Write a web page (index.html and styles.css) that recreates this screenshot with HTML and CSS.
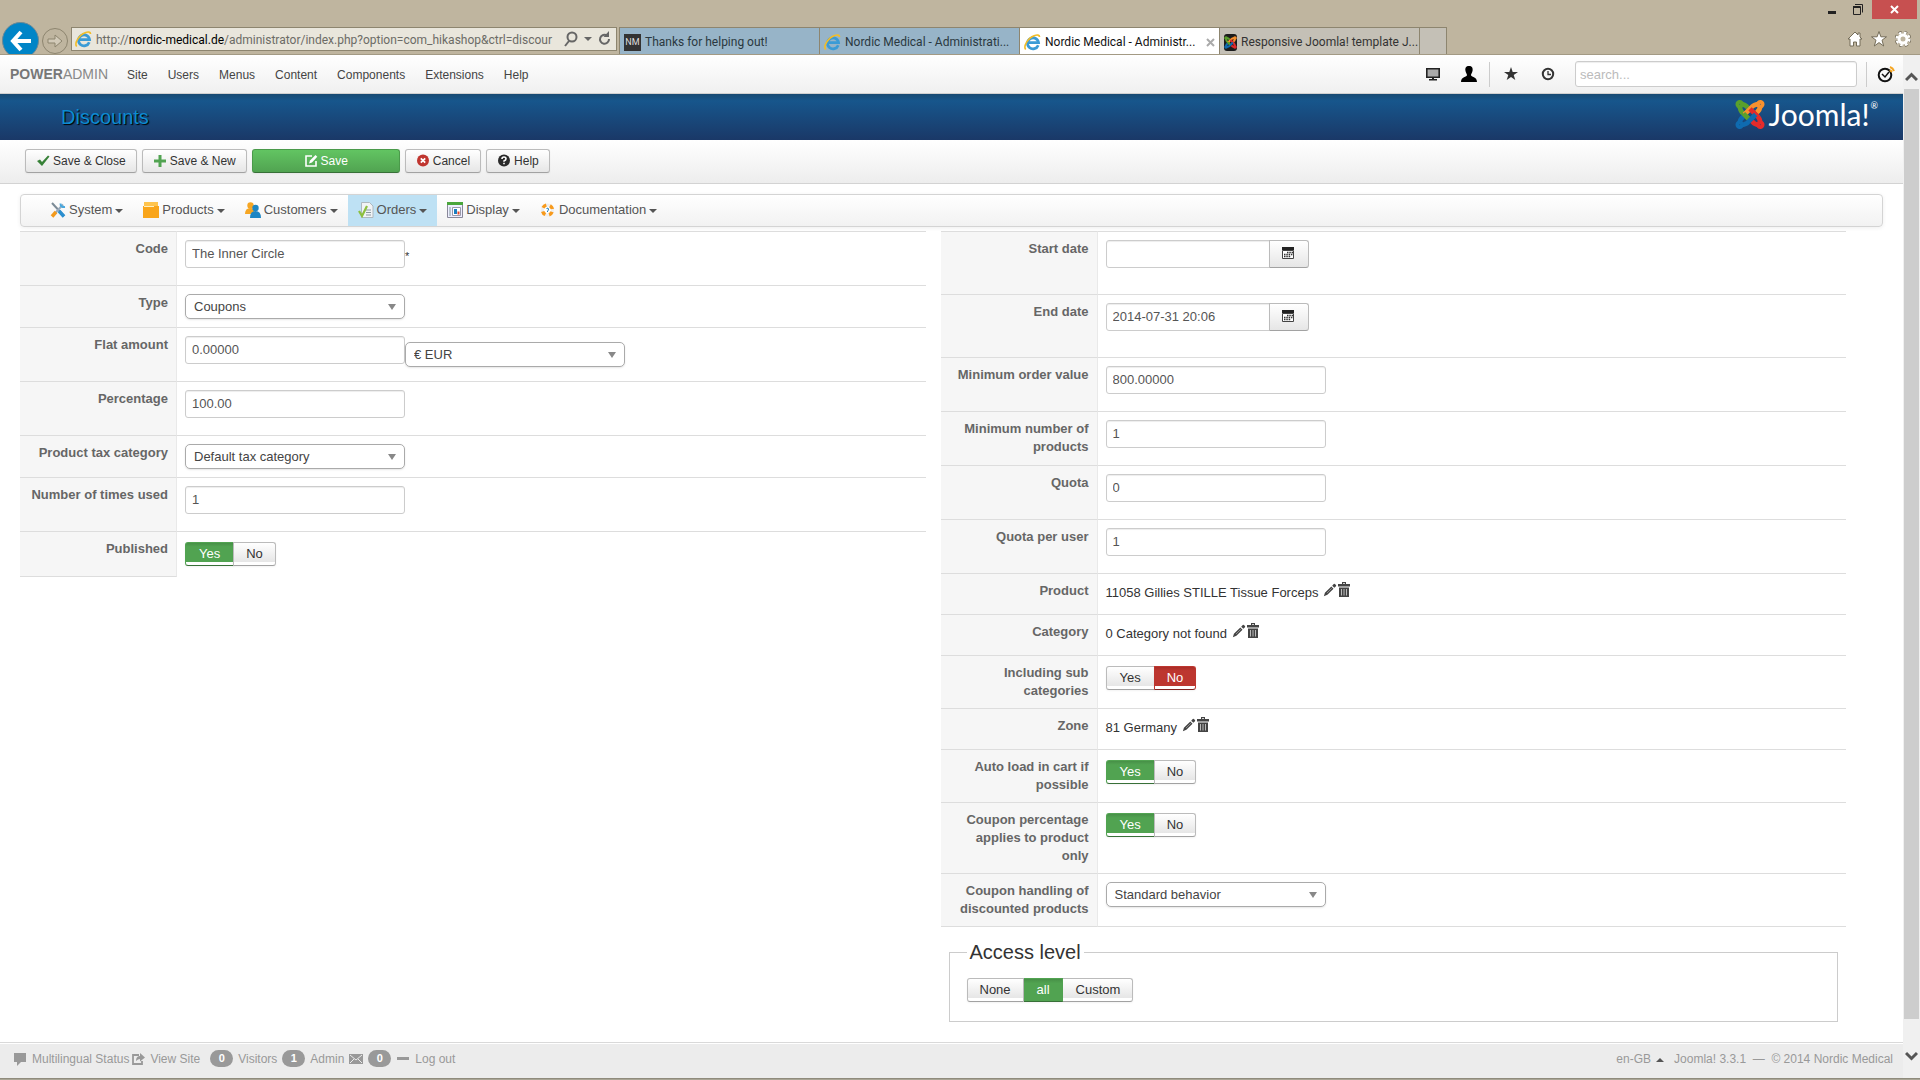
FILE: index.html
```html
<!DOCTYPE html>
<html lang="en-GB">
<head>
<meta charset="utf-8">
<title>Nordic Medical - Administration</title>
<link rel="stylesheet" href="styles.css">
</head>
<body>
<svg class="defs" aria-hidden="true">
  <symbol id="ie" viewBox="0 0 16 16">
    <path d="M13.400 10.600A5.200 5.200 0 1 1 13.700 8.200H4.600" fill="none" stroke="#3b9bd6" stroke-width="2.600"/>
    <path d="M1.600 14.600C-1 11.500 4 3.600 9.500 1.600c3-1.100 5-.8 5.200 1.200" fill="none" stroke="#f3bd27" stroke-width="1.500"/>
  </symbol>
  <symbol id="joomla" viewBox="0 0 32 32">
    <g fill="none" stroke-width="5">
      <g stroke="#5aa02c"><circle cx="5" cy="5" r="2"/><path d="M5 6Q5 12 9 15L16 22M6 5Q11 5 14 9"/></g>
      <g stroke="#f9912e" transform="rotate(90 16 16)"><circle cx="5" cy="5" r="2"/><path d="M5 6Q5 12 9 15L16 22M6 5Q11 5 14 9"/></g>
      <g stroke="#e32b2b" transform="rotate(180 16 16)"><circle cx="5" cy="5" r="2"/><path d="M5 6Q5 12 9 15L16 22M6 5Q11 5 14 9"/></g>
      <g stroke="#0f6bb0" transform="rotate(270 16 16)"><circle cx="5" cy="5" r="2"/><path d="M5 6Q5 12 9 15L16 22M6 5Q11 5 14 9"/></g>
      <path stroke="#5aa02c" d="M9 15L14 20"/>
    </g>
  </symbol>
  <symbol id="calendar" viewBox="0 0 16 16">
    <path d="M2 2h12v3H2z" fill="#222"/><path d="M2.500 5.500h11v8h-11z" fill="#fff" stroke="#444"/>
    <path d="M7 7.500h6M4 9.500h9M4 11.500h7" stroke="#333" stroke-width="1.400" stroke-dasharray="1.500 .8"/>
  </symbol>
  <symbol id="pencil" viewBox="0 0 16 16">
    <path d="M1 15l1.200-4L9.500 4l2.500 2.500-7 7zM10.500 3l1.800-1.800q.7-.6 1.300 0l1.200 1.200q.6.600 0 1.300L13 5.500z" fill="#444"/><path d="M4.500 11.500L10 6" stroke="#999"/>
  </symbol>
  <symbol id="trash" viewBox="0 0 16 16">
    <path d="M2 2h4V0h4v2h4v2.500H2zM7 1.200v.8h2v-.8zM3 5.500h10V15H3z" fill="#444" fill-rule="evenodd"/><path d="M5.500 7v6.500M8 7v6.500M10.500 7v6.500" stroke="#bbb"/>
  </symbol>
</svg>

<header class="chrome">
  <div class="titlebar">
    <button class="win" aria-label="Minimise"><svg width="12" height="16"><path d="M2 11h8v3H2z" fill="#222"/></svg></button>
    <button class="win" aria-label="Restore"><svg width="12" height="16" fill="none" stroke="#222"><path d="M1 6.500h7.500v8H1.500v-8M1 7.500h8M3 4.500h7.500v8"/></svg></button>
    <button class="win win-close" aria-label="Close"><svg width="9" height="19" stroke="#fff" stroke-width="2"><path d="M1 6l7 7M8 6l-7 7"/></svg></button>
  </div>
  <div class="navrow">
    <button class="back" aria-label="Back"><svg width="24" height="24" fill="none" stroke="#fff" stroke-width="4"><path d="M22 12H4M12 3l-8 9 8 9"/></svg></button>
    <button class="forward" aria-label="Forward"><svg width="18" height="18" fill="#d2cab8" stroke="#8d856f"><path d="M2 7h7V3l7 6-7 6v-4H2z"/></svg></button>
    <div class="address">
      <svg width="17" height="17"><use href="#ie"/></svg>
      <span class="url">http://<b>nordic-medical.de</b>/administrator/index.php?option=com_hikashop&amp;ctrl=discour</span>
      <svg width="50" height="16" fill="none" stroke="#666" stroke-width="2"><circle cx="9" cy="6" r="4.500"/><path d="M6 10l-4 5"/><path d="M21 6h8l-4 4z" fill="#666" stroke="none"/><path d="M44 4.500A4.500 4.500 0 1 0 46 8"/><path d="M46 0v6h-5.500z" fill="#666" stroke="none"/></svg>
    </div>
    <div class="tabs">
      <a class="tab" href="#"><span class="nm">NM</span><span>Thanks for helping out!</span></a>
      <a class="tab" href="#"><svg width="17" height="17"><use href="#ie"/></svg><span>Nordic Medical - Administrati...</span></a>
      <a class="tab tab-on" href="#"><svg width="17" height="17"><use href="#ie"/></svg><span>Nordic Medical - Administr...</span><svg class="tab-x" width="9" height="9" stroke="#aaa" stroke-width="2"><path d="M1 1l7 7M8 1l-7 7"/></svg></a>
      <a class="tab tab-grey" href="#"><span class="fav"><svg width="13" height="13"><use href="#joomla"/></svg></span><span>Responsive Joomla! template J...</span></a>
      <button class="tab-new" aria-label="New tab"></button>
    </div>
    <div class="tools">
      <svg width="16" height="16" viewBox="0 0 16 16"><path d="M8 1L1 8h2v7h3.500v-4h3v4H13V8h2l-2-2V2h-2v2z"/></svg>
      <svg width="16" height="16" viewBox="0 0 16 16"><path d="M8 .5l1.900 5.300h5.600l-4.500 3.400 1.700 5.800L8 11.600 3.300 15 5 9.200.5 5.800h5.600z"/></svg>
      <svg width="16" height="16" viewBox="0 0 16 16"><circle cx="8" cy="8" r="6.300" fill="none" stroke="#756d59" stroke-width="4" stroke-dasharray="3 1.950"/><circle cx="8" cy="8" r="6.300" fill="none" stroke="#fff" stroke-width="2.500" stroke-dasharray="2.600 2.350"/><circle cx="8" cy="8" r="4" fill="none" stroke="#fff" stroke-width="3"/><circle cx="8" cy="8" r="2" fill="#bfb59f"/></svg>
    </div>
  </div>
</header>

<div class="viewport">
<div class="page">
  <nav class="topnav">
    <a class="brand" href="#"><b>POWER</b>ADMIN</a>
    <a href="#">Site</a><a href="#">Users</a><a href="#">Menus</a><a href="#">Content</a><a href="#">Components</a><a href="#">Extensions</a><a href="#">Help</a>
    <div class="topicons">
      <svg width="16" height="16"><path d="M1.800 2.800h12.400v8.400H1.800z" fill="#aaa" stroke="#222" stroke-width="1.600"/><path d="M7 11h2v2h3v1.500H4V13h3z" fill="#222"/></svg>
      <svg class="user" width="18" height="18"><path d="M9 1c3 0 4 2 3.600 4.500C12.300 8 11 9 11 10c0 2 6 1.500 6 7H1c0-5.500 6-5 6-7 0-1-1.300-2-1.600-4.500C5 3 6 1 9 1z" fill="#000"/></svg>
      <div class="recent">
        <svg width="14" height="14"><path d="M7 0l1.700 5H14L9.700 8.100 11.300 13 7 10 2.700 13l1.600-4.900L0 5h5.300z" fill="#333"/></svg>
        <svg width="14" height="14" fill="none" stroke="#333" stroke-width="2"><circle cx="7" cy="7" r="5.200"/><path d="M7 4v3.500h3" stroke-width="1.300"/></svg>
      </div>
      <input class="search" type="text" placeholder="search..." aria-label="Search">
      <div class="jsn"><svg width="20" height="18" fill="none" stroke="#111" stroke-width="2"><circle cx="8" cy="10" r="6.300"/><path d="M5 9l3 3 4-5" stroke-width="1.500"/><path d="M13 2q3 1 4 4M13 5l2 2" stroke="#f5a623"/></svg></div>
    </div>
  </nav>
  <div class="pagehead"><h1>Discounts</h1><div class="joomla"><svg width="30" height="31" viewBox="0 0 32 32"><use href="#joomla"/></svg><span>Joomla!</span><sup>®</sup></div></div>
  <div class="toolbar">
    <button class="btn"><svg width="14" height="14"><path d="M1 7l3-1.500L6 8l6-6.500 1.500 1L6 12z" fill="#378137"/></svg>Save &amp; Close</button>
    <button class="btn"><svg width="14" height="14"><path d="M5.500 1h3v4.500H13v3H8.500V13h-3V8.500H1v-3h4.500z" fill="#51a351"/></svg>Save &amp; New</button>
    <button class="btn btn-save"><svg width="14" height="14" fill="none" stroke="#fff" stroke-width="1.600"><path d="M8 2H2v10h10V7"/><path d="M5 9.500l1-3L11.500 1l1.800 1.800L8 8.500z" fill="#fff" stroke="none"/></svg>Save</button>
    <button class="btn"><svg width="14" height="14"><circle cx="7" cy="6.500" r="6" fill="#c0352f"/><path d="M4.800 4.300l4.400 4.400M9.200 4.300L4.800 8.700" stroke="#fff" stroke-width="1.700"/></svg>Cancel</button>
    <button class="btn"><svg width="14" height="14"><circle cx="7" cy="6.500" r="6" fill="#2b2b2b"/><path d="M5 5q0-2 2-2t2 1.700Q9 6 7 7v.8M7 8.800v1.500" fill="none" stroke="#fff" stroke-width="1.600"/></svg>Help</button>
  </div>

  <nav class="hika">
    <a href="#"><svg width="16" height="16"><path d="M2 1l12 13" stroke="#7b8b96" stroke-width="2"/><path d="M9 9l5 5.500" stroke="#2b8fd0" stroke-width="3.500"/><path d="M13 2.500L3 13.500" stroke="#9ab" stroke-width="2"/><path d="M6 10l-4 4.500" stroke="#f39a1c" stroke-width="3.500"/><path d="M10.500 1.500q0 4 4.500 3.500" fill="none" stroke="#49a7dd" stroke-width="2"/></svg>System</a>
    <a href="#"><svg width="16" height="16"><path d="M1 0h14v4H1z" fill="#ffc44d"/><path d="M0 4h16v12H0z" fill="#f9a51a"/><path d="M1 4.500h10" stroke="#fff0c0"/></svg>Products</a>
    <a href="#"><svg width="16" height="16"><circle cx="5.500" cy="3.500" r="3.200" fill="#f6a623"/><path d="M0 12q0-6 5.500-6 3 0 4 3v3z" fill="#f6a623"/><circle cx="10.500" cy="6" r="3.200" fill="#1c86c4"/><path d="M5 16q0-7 5.500-7t5.500 7z" fill="#1c86c4"/></svg>Customers</a>
    <a class="on" href="#"><svg width="16" height="16"><path d="M3.500.5h8l3.500 3.500v11.500H3.500z" fill="#f0f3f5" stroke="#aeb8be"/><path d="M8 8h5M8 10.500h5M8 13h5" stroke="#8a98a0"/><path d="M1 9l3 5 5-10" fill="none" stroke="#8cbf3f" stroke-width="2.200"/></svg>Orders</a>
    <a href="#"><svg width="16" height="16"><path d="M.5 1.500h15v14H.5z" fill="#eef" stroke="#889"/><path d="M0 0h16v3H0z" fill="#4aa63c"/><path d="M2 5h2v9H2z" fill="#b9c5ce"/><path d="M5.500 5.500h8v8h-8z" fill="#fff" stroke="#99a"/><path d="M7 7h3v5H7z" fill="#1b7ec0"/><path d="M10.500 9.500h2v3h-2z" fill="#e8472b"/></svg>Display</a>
    <a href="#"><svg width="16" height="16"><circle cx="7.500" cy="8" r="5" fill="#fff" stroke="#eee" stroke-width="3"/><circle cx="7.500" cy="8" r="5" fill="none" stroke="#f79a1c" stroke-width="3.500" stroke-dasharray="4 3.854" stroke-dashoffset="-2"/><path d="M6.500 6.500q2-1 2 .500t-1 2v1" fill="none" stroke="#1b7ec0"/></svg>Documentation</a>
  </nav>

  <main class="columns">
    <table class="form">
      <tr class="r-input"><th><label for="code">Code</label></th><td><input id="code" type="text" value="The Inner Circle"><span class="req">*</span></td></tr>
      <tr><th><label for="type">Type</label></th><td><span class="sel"><select id="type"><option>Coupons</option></select></span></td></tr>
      <tr class="r-input"><th><label for="flat">Flat amount</label></th><td><div class="pair"><input id="flat" type="text" value="0.00000"><span class="sel"><select aria-label="Currency"><option>€ EUR</option></select></span></div></td></tr>
      <tr class="r-input"><th><label for="pct">Percentage</label></th><td><input id="pct" type="text" value="100.00"></td></tr>
      <tr><th><label for="tax">Product tax category</label></th><td><span class="sel"><select id="tax"><option>Default tax category</option></select></span></td></tr>
      <tr class="r-input"><th><label for="used">Number of times used</label></th><td><input id="used" type="text" value="1"></td></tr>
      <tr class="r-last"><th>Published</th><td><div class="group" role="radiogroup" aria-label="Published"><label class="yes"><input type="radio" name="pub" checked>Yes</label><label><input type="radio" name="pub">No</label></div></td></tr>
    </table>

    <div>
      <table class="form form-right">
        <tr class="r-date"><th><label for="start">Start date</label></th><td><div class="date"><input id="start" type="text"><button aria-label="Pick start date"><svg width="16" height="16"><use href="#calendar"/></svg></button></div></td></tr>
        <tr class="r-date"><th><label for="end">End date</label></th><td><div class="date"><input id="end" type="text" value="2014-07-31 20:06"><button aria-label="Pick end date"><svg width="16" height="16"><use href="#calendar"/></svg></button></div></td></tr>
        <tr class="r-input"><th><label for="minv">Minimum order value</label></th><td><input id="minv" type="text" value="800.00000"></td></tr>
        <tr class="r-input"><th><label for="minn">Minimum number of products</label></th><td><input id="minn" type="text" value="1"></td></tr>
        <tr class="r-input"><th><label for="quota">Quota</label></th><td><input id="quota" type="text" value="0"></td></tr>
        <tr class="r-input"><th><label for="quser">Quota per user</label></th><td><input id="quser" type="text" value="1"></td></tr>
        <tr><th>Product</th><td><div class="pick"><span>11058 Gillies STILLE Tissue Forceps</span><a href="#" aria-label="Edit"><svg width="14" height="16"><use href="#pencil" width="14" height="16"/></svg></a><a href="#" aria-label="Delete"><svg width="12" height="16" viewBox="2 0 12 16"><use href="#trash" width="16" height="16"/></svg></a></div></td></tr>
        <tr><th>Category</th><td><div class="pick"><span>0 Category not found</span><a href="#" aria-label="Edit"><svg width="14" height="16"><use href="#pencil" width="14" height="16"/></svg></a><a href="#" aria-label="Delete"><svg width="12" height="16" viewBox="2 0 12 16"><use href="#trash" width="16" height="16"/></svg></a></div></td></tr>
        <tr><th>Including sub categories</th><td><div class="group" role="radiogroup" aria-label="Including sub categories"><label><input type="radio" name="sub">Yes</label><label class="no"><input type="radio" name="sub" checked>No</label></div></td></tr>
        <tr><th>Zone</th><td><div class="pick"><span>81 Germany</span><a href="#" aria-label="Edit"><svg width="14" height="16"><use href="#pencil" width="14" height="16"/></svg></a><a href="#" aria-label="Delete"><svg width="12" height="16" viewBox="2 0 12 16"><use href="#trash" width="16" height="16"/></svg></a></div></td></tr>
        <tr><th>Auto load in cart if possible</th><td><div class="group" role="radiogroup" aria-label="Auto load in cart if possible"><label class="yes"><input type="radio" name="auto" checked>Yes</label><label><input type="radio" name="auto">No</label></div></td></tr>
        <tr><th>Coupon percentage applies to product only</th><td><div class="group" role="radiogroup" aria-label="Coupon percentage applies to product only"><label class="yes"><input type="radio" name="only" checked>Yes</label><label><input type="radio" name="only">No</label></div></td></tr>
        <tr><th><label for="handling">Coupon handling of discounted products</label></th><td><span class="sel"><select id="handling"><option>Standard behavior</option></select></span></td></tr>
      </table>
      <fieldset class="access">
        <legend>Access level</legend>
        <div class="group"><label><input type="radio" name="acl">None</label><label class="yes full"><input type="radio" name="acl" checked>all</label><label><input type="radio" name="acl">Custom</label></div>
      </fieldset>
    </div>
  </main>

  <footer class="status">
    <svg width="14" height="14"><path d="M1 1h12v9H8l-4 4v-4H1z"/></svg><a href="#">Multilingual Status</a>
    <svg width="14" height="14"><path d="M8 3H2v9h9V9" fill="none" stroke="#999" stroke-width="1.800"/><path d="M5 9q0-5 4-5V1l5 4.500-5 4V7Q7 7 5 9z"/></svg><a class="view" href="#">View Site</a>
    <span class="badge">0</span><span>Visitors</span>
    <span class="badge">1</span><span>Admin</span>
    <svg width="14" height="14"><path d="M0 2h14v10H0z"/><path d="M1 3l6 5 6-5M1 11l4-4M13 11L9 7" fill="none" stroke="#ececec"/></svg>
    <span class="badge">0</span>
    <svg width="14" height="14"><path d="M1 5h12v3H1z"/></svg><a href="#">Log out</a>
    <span class="right"><a class="lang" href="#">en-GB</a><span>Joomla! 3.3.1&nbsp; —&nbsp; © 2014 Nordic Medical</span></span>
  </footer>
</div>
<div class="scroll" aria-hidden="true">
  <svg width="13" height="10" fill="none" stroke="#555" stroke-width="3"><path d="M1 8l5.500-5.500L12 8"/></svg>
  <div class="thumb"></div>
  <svg width="13" height="10" fill="none" stroke="#555" stroke-width="3"><path d="M1 2l5.500 5.500L12 2"/></svg>
</div>
</div>
<div class="taskbar"></div>
</body>
</html>
```
FILE: styles.css
```css
* { box-sizing: border-box; }
body {
  margin: 0;
  min-height: 100vh;
  display: flex;
  flex-direction: column;
  background: #fff;
  color: #333;
  font: 13px/18px "Liberation Sans", Arial, sans-serif;
}
a { color: inherit; text-decoration: none; }
button, input, select { font: inherit; color: inherit; margin: 0; }
svg { flex: none; display: block; }
.defs { position: absolute; width: 0; height: 0; }

/* Browser frame */
.chrome { background: #bfb59f; border-bottom: 1px solid #a39a84; overflow: hidden; font: 12px/18px Roboto, "Noto Sans", sans-serif; }
.titlebar { height: 27px; display: flex; justify-content: flex-end; align-items: flex-start; padding-right: 3px; }
.win { border: 0; background: none; padding: 0; height: 19px; width: 26px; display: flex; justify-content: center; }
.win-close { width: 45px; margin-left: 1px; background: #c75050; }
.navrow { height: 27px; display: flex; align-items: center; padding-left: 2px; }
.back { flex: none; width: 37px; height: 37px; border: 1px solid #6d8894; border-radius: 50%; background: #0085c7; padding: 0; display: grid; place-items: center; margin-right: 3px; }
.forward { flex: none; width: 26px; height: 26px; border: 1px solid #8d856f; border-radius: 50%; background: none; padding: 0; display: grid; place-items: center; margin-right: 3px; }
.address { flex: none; width: 546px; height: 24px; margin: 0 2px 3px 0; border: 1px solid #8d856f; background: #e9e6dc; display: flex; align-items: center; gap: 4px; padding: 0 3px; }
.url { flex: 1; min-width: 0; color: #6c6b66; white-space: nowrap; padding-top: 2px; }
.url b { font-weight: 400; color: #000; }
.tabs { display: flex; align-self: stretch; border: solid #8d856f; border-width: 1px 0 0 1px; }
.tab { width: 200px; display: flex; align-items: center; gap: 4px; padding: 2px 4px 0; border-right: 1px solid #8d856f; background: #97b4c8; color: #2a3840; white-space: nowrap; }
.tab-on { background: #fff; color: #111; }
.tab-x { margin-left: auto; }
.tab-grey { background: #c4c0b6; color: #333; }
.tab-new { width: 27px; padding: 0; border: 0; border-right: 1px solid #8d856f; background: #c4c0b6; }
.nm { width: 17px; height: 17px; background: #333; color: #ddd; font-size: 9px; line-height: 17px; text-align: center; }
.fav { width: 17px; height: 17px; border-radius: 3px; background: #1c1c1c; display: grid; place-items: center; }
.tools { margin-left: auto; display: flex; gap: 8px; padding: 0 9px 3px 0; }
.tools path { fill: #fff; stroke: #756d59; stroke-width: 1; }

.viewport { flex: 1; display: flex; }
.page { flex: 1; min-width: 0; display: flex; flex-direction: column; }
.scroll { width: 17px; background: #f0f0f0; display: flex; flex-direction: column; align-items: center; padding: 17px 1px; }
.thumb { flex: 1; align-self: stretch; background: #cdcdcd; margin: 7px 0 32px; }
.taskbar { height: 2px; background: #a9a595; border-top: 1px solid #8f8b7c; }

/* Admin bar */
.topnav { height: 39px; display: flex; align-items: center; padding: 0 10px; background: linear-gradient(#fff, #f0f0f0); border-bottom: 1px solid #d0d0d0; font-size: 12px; color: #444; }
.topnav > a { padding: 2px 10px 0; }
.topnav > .brand { padding: 0 9px 0 0; font-size: 14px; color: #888; }
.brand b { color: #777; }
.topicons { margin-left: auto; display: flex; align-items: center; }
.user { margin: 0 11px 0 19px; }
.recent { display: flex; align-items: center; gap: 23px; height: 25px; margin-right: 20px; padding-left: 14px; border-left: 1px solid #ccc; }
.search { width: 282px; height: 26px; border: 1px solid #ccc; border-radius: 3px; background: #fff; padding: 0 4px; font-size: 13px; box-shadow: inset 0 1px 1px #eee; }
.search::placeholder { color: #bbb; opacity: 1; }
.jsn { margin-left: 9px; padding-left: 10px; border-left: 1px solid #ccc; height: 25px; display: flex; align-items: center; margin-right: -4px; }

.pagehead { height: 46px; display: flex; justify-content: space-between; align-items: center; padding: 0 25px 0 61px; background: linear-gradient(#184a72, #17568c 15%, #1a3867); }
h1 { margin: 0; font-size: 20px; line-height: 24px; font-weight: 400; color: #0d8bd2; text-shadow: 1px 1px 1px #000; }
.joomla { display: flex; align-items: center; gap: 4px; color: #fff; font: 30px/30px Lato, sans-serif; padding-bottom: 6px; }
.joomla sup { font-size: 9px; line-height: 10px; align-self: flex-start; margin: 2px 0 0 -3px; }

.toolbar { height: 44px; display: flex; align-items: flex-start; gap: 5px; padding: 9px 25px; background: linear-gradient(#fff, #ededed); border-bottom: 1px solid #d3d3d3; }
.btn { height: 24px; display: flex; align-items: center; justify-content: center; gap: 3px; padding: 0 10px; border: 1px solid #bbb; border-bottom-color: #a2a2a2; border-radius: 3px; background: linear-gradient(#fff, #e6e6e6); box-shadow: 0 1px 2px #0000000d; font-size: 12px; color: #333; white-space: nowrap; }
.btn-save { width: 148px; color: #fff; background: linear-gradient(#62c462, #51a351); border-color: #4a9a4a #4a9a4a #387038; }

.hika { margin: 10px 20px 4px; height: 33px; display: flex; padding-left: 19px; border: 1px solid #d4d4d4; border-radius: 4px; background: linear-gradient(#fff, #f2f2f2); box-shadow: 0 1px 4px #00000011; color: #555; }
.hika a { display: flex; align-items: center; padding: 0 10px 2px; }
.hika svg { margin-right: 3px; }
.hika a::after { content: ""; margin: 3px 0 0 3px; border: 4px solid transparent; border-top-color: #555; border-bottom: 0; }
.hika .on { background: #bee1f4; }

/* Forms */
.columns { flex: 1; display: grid; grid-template-columns: 1fr 1fr; gap: 15px; padding: 0 57px 20px 20px; align-items: start; }
.form { width: 100%; border-spacing: 0; table-layout: fixed; }
.form tr { height: 41px; }
.form th { width: 157px; padding: 8px; text-align: right; vertical-align: top; color: #666; background: #f6f6f6; border: solid #e9e9e9; border-width: 1px 1px 0 0; }
.form th, .form td { border-top-color: #ddd; }
.form td { padding: 8px; vertical-align: top; border-top: 1px solid #ddd; }
.form tr:last-child th { border-bottom: 1px solid #ddd; }
.form-right tr:last-child td { border-bottom: 1px solid #ddd; }
.form .r-input { height: 54px; }
.form .r-date { height: 63px; }
.form .r-last { height: 46px; }
.form input[type="text"] { width: 220px; height: 28px; padding: 0 6px 1px; border: 1px solid #ccc; border-radius: 3px; background: #fff; color: #555; box-shadow: inset 0 1px 1px #00000013; vertical-align: top; }
.req { font-size: 11px; line-height: 32px; vertical-align: top; }
.pair { display: flex; height: 37px; }
.pair .sel { margin-top: 6px; }
.sel { display: block; width: 220px; height: 25px; position: relative; }
.sel select { width: 100%; height: 25px; padding: 0 8px; border: 1px solid #aaa; border-radius: 5px; appearance: none; background: #fff; color: #444; box-shadow: 0 1px 2px #0000001a; }
.sel::after { content: ""; position: absolute; right: 9px; top: 10px; border: 4px solid transparent; border-top: 6px solid #888; border-bottom: 0; pointer-events: none; }
.date { display: flex; height: 46px; align-items: flex-start; }
.form .date input[type="text"] { width: 164px; border-radius: 3px 0 0 3px; }
.date button { width: 40px; height: 28px; margin-left: -1px; padding: 0 2px 3px 0; display: grid; place-items: center; border: 1px solid #bbb; border-bottom-color: #a2a2a2; border-radius: 0 3px 3px 0; background: linear-gradient(#fff, #e6e6e6); }
.pick { display: flex; height: 24px; line-height: 22px; }
.pick a:first-of-type { margin-left: 5px; }
.pick a:last-child { margin-left: 1px; }

.group { display: inline-flex; margin-top: 2px; height: 24px; vertical-align: top; }
.group label { padding: 0 13px; border: 1px solid #bbb; border-bottom-color: #a2a2a2; line-height: 22px; background: linear-gradient(#fff, #e6e6e6) 0 0 / 100% 19px no-repeat #fff; box-shadow: 0 1px 2px #0000000d; color: #333; }
.group label + label { margin-left: -1px; padding: 0 12px; }
.group label:first-child { border-radius: 3px 0 0 3px; }
.group label:last-child { border-radius: 0 3px 3px 0; }
.group input { position: absolute; opacity: 0; pointer-events: none; }
.group .yes { color: #fff; background: linear-gradient(#479047, #51a351 20%) 0 0 / 100% 19px no-repeat #fff; border-color: #51a351 #51a351 #387038; }
.group .no { color: #fff; background: linear-gradient(#a92c27, #bd362f 20%) 0 0 / 100% 19px no-repeat #fff; border-color: #bd362f #bd362f #802420; }
.group .full { background-size: 100% 100%; }

.access { margin: 15px 8px 0; padding: 0 17px 19px; border: 1px solid #ccc; min-width: 0; }
.access legend { padding: 0 3px; font-size: 20px; line-height: 20px; }
.access .group { display: flex; width: max-content; margin-top: 16px; }
.access .group label { padding: 0 12px; }
.access .group label + label { margin-left: 0; border-left-width: 0; padding-left: 13px; }

/* Status bar */
.status { height: 36px; display: flex; align-items: center; gap: 5px; padding: 0 10px 4px 13px; border-top: 1px solid #d9d9d9; background: #ececec; box-shadow: inset 0 1px 0 #fff; font-size: 12px; color: #999; white-space: nowrap; }
.status svg { fill: #999; }
.status > a { margin-right: -3px; }
.status .view { margin-right: 5px; }
.badge { min-width: 23px; height: 17px; border-radius: 9px; background: #999; color: #fff; font-weight: 700; font-size: 11px; line-height: 17px; text-align: center; }
.right { margin-left: auto; display: flex; gap: 10px; }
.lang::after { content: ""; display: inline-block; margin: 0 0 1px 5px; border: 4px solid transparent; border-bottom-color: #555; border-top: 0; }
```
